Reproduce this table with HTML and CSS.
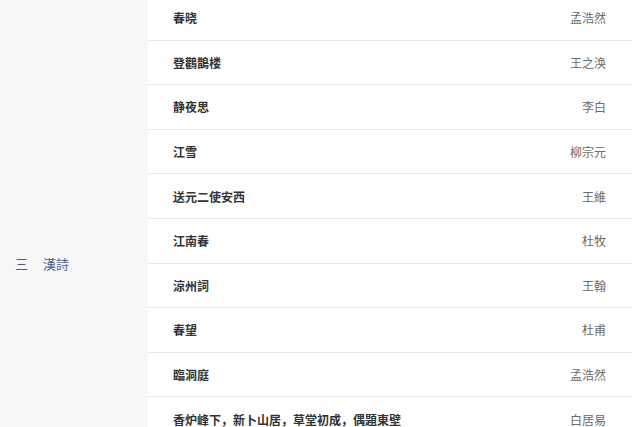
FILE: index.html
```html
<!DOCTYPE html>
<html lang="zh">
<head>
    <meta charset="UTF-8">
    <title>漢詩</title>
    <link rel="stylesheet" href="styles.css">
</head>
<body>
  <div class="page">
    <div class="sidebar">
      <div class="menu-item"><span class="menu-icon">三</span><span>漢詩</span></div>
    </div>

    <ul class="poem-list">
      <li><span class="title">春晓</span><span class="author">孟浩然</span></li>
      <li><span class="title">登鸛鵲楼</span><span class="author">王之涣</span></li>
      <li><span class="title">静夜思</span><span class="author">李白</span></li>
      <li><span class="title">江雪</span><span class="author">柳宗元</span></li>
      <li><span class="title">送元二使安西</span><span class="author">王維</span></li>
      <li><span class="title">江南春</span><span class="author">杜牧</span></li>
      <li><span class="title">涼州詞</span><span class="author">王翰</span></li>
      <li><span class="title">春望</span><span class="author">杜甫</span></li>
      <li><span class="title">臨洞庭</span><span class="author">孟浩然</span></li>
      <li><span class="title">香炉峰下，新卜山居，草堂初成，偶題東壁</span><span class="author">白居易</span></li>
    </ul>
  </div>
</body>
</html>
```

FILE: styles.css
```css
body {
    margin: 0;
    font-family: "Noto Sans CJK SC", "Noto Sans CJK TC", sans-serif;
    background-color: #fff;
    overflow: hidden;
}

.page {
    display: flex;
    height: 427px;
}

.sidebar {
    width: 148px;
    flex-shrink: 0;
    padding-top: 255px;
    box-sizing: border-box;
    background-color: #f7f7f7;
}

.menu-item {
    display: flex;
    align-items: center;
    padding-left: 15px;
    font-size: 13px;
    line-height: 18px;
    color: #4b5f8c;
}

.menu-icon {
    width: 28px;
}

.poem-list {
    list-style: none;
    margin: -4px 0 0 0;
    padding: 0;
    width: 484px;
    flex: none;
    background-color: #fff;
}

.poem-list li {
    display: flex;
    justify-content: space-between;
    align-items: center;
    height: 43.6px;
    padding: 0 26px 0 25px;
    border-bottom: 1px solid #e9e9e9;
    font-size: 12px;
}

.title {
    font-weight: bold;
    color: #333;
}

.author {
    color: #6a6a6a;
}
```
